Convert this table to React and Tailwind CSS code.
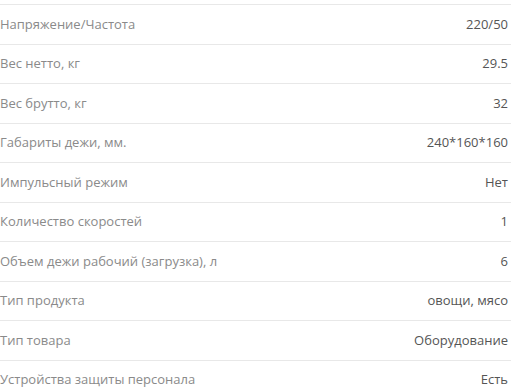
const rows = [
  ["Напряжение/Частота", "220/50"],
  ["Вес нетто, кг", "29.5"],
  ["Вес брутто, кг", "32"],
  ["Габариты дежи, мм.", "240*160*160"],
  ["Импульсный режим", "Нет"],
  ["Количество скоростей", "1"],
  ["Объем дежи рабочий (загрузка), л", "6"],
  ["Тип продукта", "овощи, мясо"],
  ["Тип товара", "Оборудование"],
  ["Устройства защиты персонала", "Есть"],
];

export default function App() {
  return (
    <div
      className="w-[516px] h-[390px] overflow-hidden bg-white pt-[4px]"
      style={{ fontFamily: '"Open Sans", sans-serif' }}
    >
      <div className="w-[511px] border-t border-[#e8e8e8]">
        {rows.map(([label, value]) => (
          <div
            key={label}
            className="flex items-center justify-between h-[39.5px] border-b border-[#e8e8e8] pr-[3px] text-[13px]"
          >
            <span className="text-[#8a8a8a]">{label}</span>
            <span className="text-[#555]">{value}</span>
          </div>
        ))}
      </div>
    </div>
  );
}
